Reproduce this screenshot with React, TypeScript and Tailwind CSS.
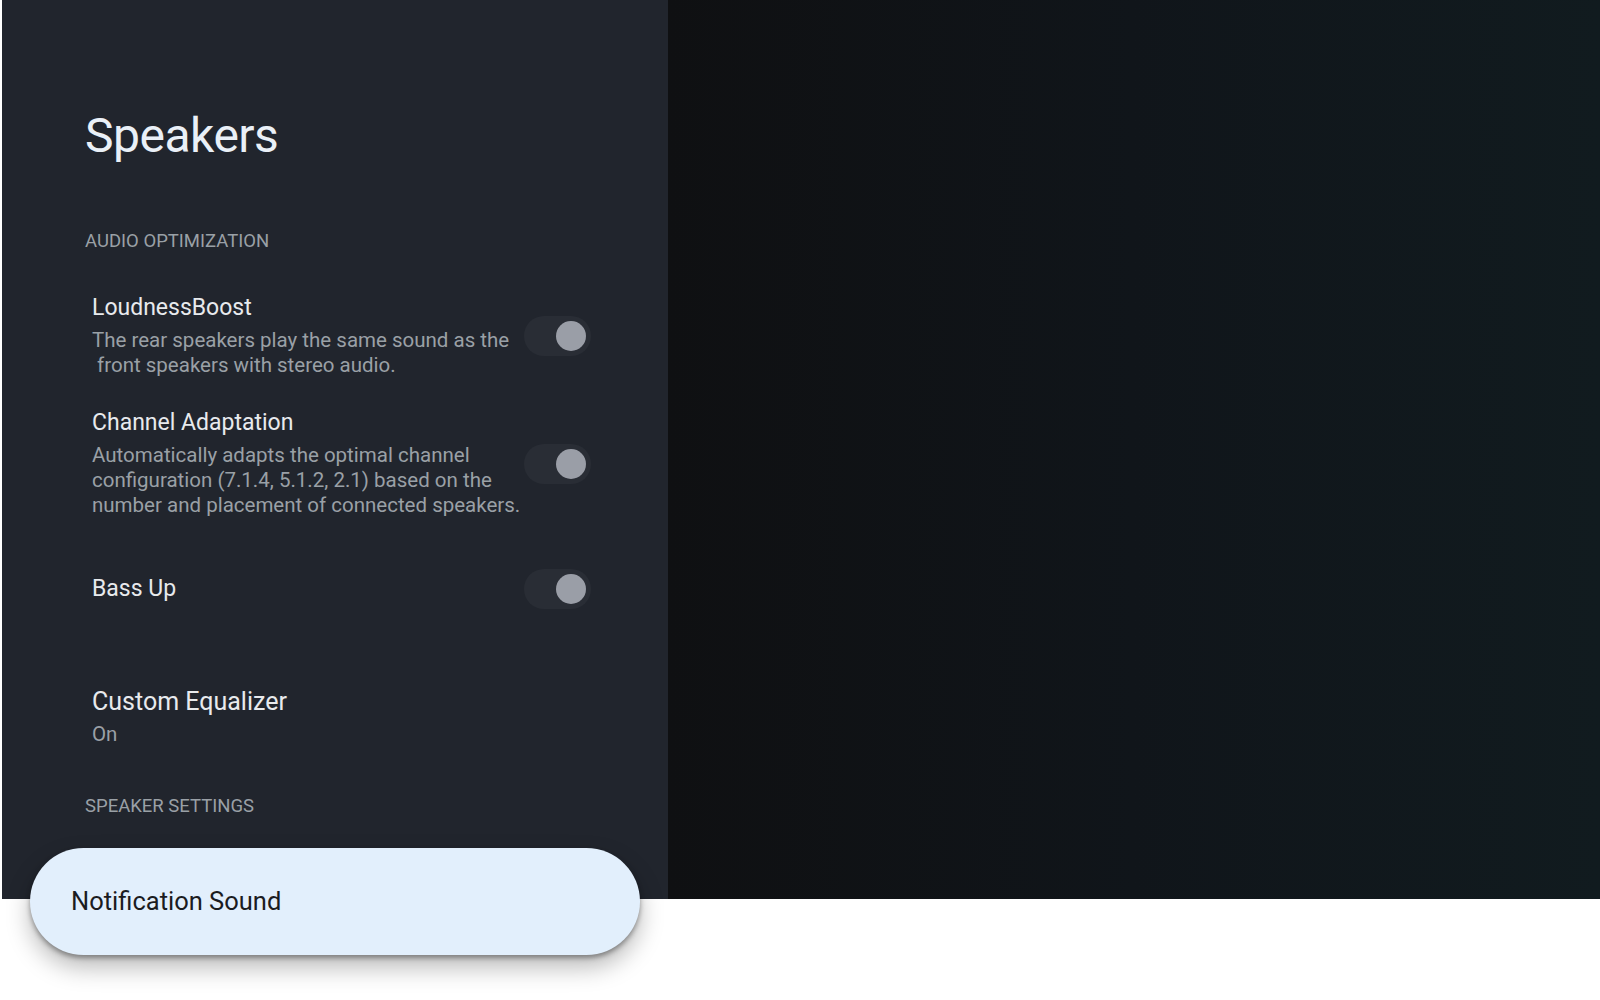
import { ReactNode } from 'react'

interface ToggleRowProps {
  title: string
  children?: ReactNode
}

function Toggle() {
  return (
    <div className="w-[67px] h-[40px] rounded-full bg-[#292d35] flex items-center justify-end pr-[5px] shrink-0">
      <div className="w-[30px] h-[30px] rounded-full bg-[#9a9ea7]" />
    </div>
  )
}

function ToggleRow({ title, children }: ToggleRowProps) {
  return (
    <div className="flex items-center justify-between pl-[7px] w-[506px]">
      <div className="flex flex-col">
        <div className="text-[23px] leading-[28px] text-[#e8eaed]">{title}</div>
        {children && (
          <div className="mt-[6px] text-[20.5px] leading-[25px] text-[#9aa0a6]">{children}</div>
        )}
      </div>
      <Toggle />
    </div>
  )
}

function SectionHeader({ label }: { label: string }) {
  return (
    <div className="text-[18.5px] leading-[24px] text-[#9aa0a6] uppercase">{label}</div>
  )
}

export default function App() {
  return (
    <div className="w-[1600px] h-[1000px] bg-white" style={{ fontFamily: 'Roboto, "Open Sans", sans-serif' }}>
      <div className="h-[899px] flex">
        {/* settings panel */}
        <div className="ml-[2px] w-[666px] h-full bg-[#21252d] flex flex-col">
          <div className="pl-[83px] pt-[108px] flex flex-col">
            <h1 className="text-[48px] leading-[56px] text-[#eaf0f7] tracking-[-0.5px]">Speakers</h1>

            <div className="mt-[65px]">
              <SectionHeader label="Audio Optimization" />
            </div>

            <div className="mt-[41px]">
              <ToggleRow title="LoudnessBoost">
                The rear speakers play the same sound as the
                <br />
                {'\u00a0'}front speakers with stereo audio.
              </ToggleRow>
            </div>

            <div className="mt-[31px]">
              <ToggleRow title="Channel Adaptation">
                Automatically adapts the optimal channel
                <br />
                configuration (7.1.4, 5.1.2, 2.1) based on the
                <br />
                number and placement of connected speakers.
              </ToggleRow>
            </div>

            <div className="mt-[51px]">
              <ToggleRow title="Bass Up" />
            </div>

            <div className="mt-[79px] pl-[7px] flex flex-col">
              <div className="text-[25px] leading-[28px] text-[#e8eaed]">Custom Equalizer</div>
              <div className="mt-[6px] text-[20.5px] leading-[25px] text-[#9aa0a6]">On</div>
            </div>

            <div className="mt-[47px]">
              <SectionHeader label="Speaker Settings" />
            </div>
          </div>

          {/* focused item */}
          <div className="mt-[30px] ml-[28px] w-[610px] h-[107px] shrink-0 rounded-full bg-[#e2effc] flex items-center pl-[41px] shadow-[0_12px_24px_rgba(0,0,0,0.28),0_3px_5px_rgba(0,0,0,0.35)]">
            <span className="text-[25.5px] text-[#1b1c1f]">Notification Sound</span>
          </div>
        </div>

        {/* preview area */}
        <div className="flex-1 h-full bg-gradient-to-r from-[#0f1012] via-[#10151a] to-[#111b1f]" />
      </div>
    </div>
  )
}
